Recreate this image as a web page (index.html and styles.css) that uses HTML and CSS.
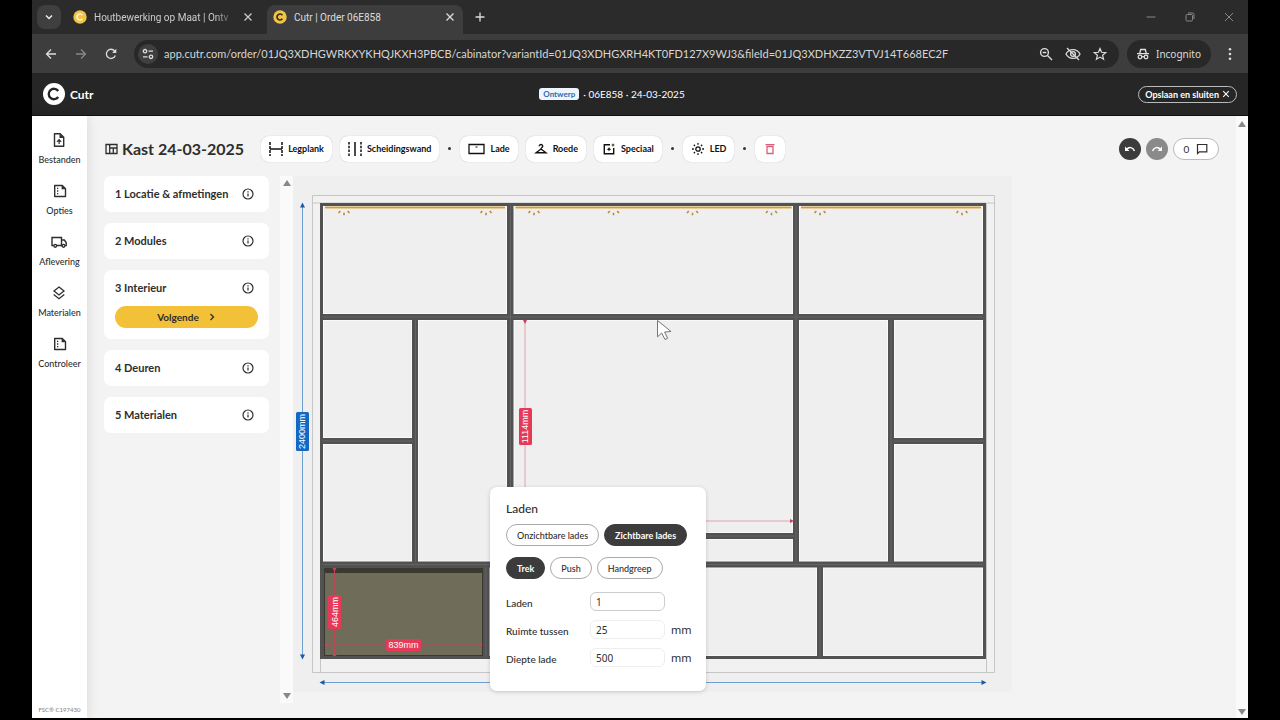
FILE: index.html
```html
<!DOCTYPE html>
<html lang="nl">
<head>
<meta charset="utf-8">
<title>Cutr | Order 06E858</title>
<link rel="stylesheet" href="styles.css">
</head>
<body>
<svg class="defs" aria-hidden="true">
  <symbol id="info" viewBox="0 0 12 12"><circle cx="6" cy="6" r="5" fill="none" stroke="currentColor" stroke-width="1.2"/><path d="M6 5.4v3.2M6 3.3v1.2" stroke="currentColor" stroke-width="1.2"/></symbol>
  <symbol id="doc" viewBox="0 0 14 14"><path d="M1.7 1.5h7.6l3.2 3.2v7.8H1.7z" fill="none" stroke="currentColor" stroke-width="1.4" stroke-linejoin="round"/><path d="M8.6 1.2v4h4.2z" fill="currentColor"/><path d="M4 4.3h1.3M4 7h1.3M4 9.700h1.3" stroke="currentColor" stroke-width="1.3"/></symbol>
  <symbol id="close" viewBox="0 0 10 10"><path d="M1.500 1.500l7 7m0-7l-7 7" fill="none" stroke="currentColor" stroke-width="1.300"/></symbol>
  <symbol id="coin" viewBox="0 0 14 14"><circle cx="7" cy="7" r="6.700" fill="#f3c344"/><path d="M9.400 5.200a3 3 0 1 0 0 3.600" fill="none" stroke="currentColor" stroke-width="1.700"/></symbol>
</svg>
<div class="window">
  <div class="tabs">
    <button class="tab-menu" aria-label="Tabbladen zoeken"><svg width="10" height="10" viewBox="0 0 10 10"><path d="M2 3.500l3 3 3-3" fill="none" stroke="#eee" stroke-width="1.500"/></svg></button>
    <div class="tab">
      <svg class="coin coin-light" width="14" height="14"><use href="#coin"/></svg>
      <span class="tab-title fade">Houtbewerking op Maat | Ontv</span>
      <button class="plain" aria-label="Tabblad sluiten"><svg width="10" height="10"><use href="#close"/></svg></button>
    </div>
    <div class="tab active">
      <svg class="coin" width="14" height="14"><use href="#coin"/></svg>
      <span class="tab-title">Cutr | Order 06E858</span>
      <button class="plain" aria-label="Tabblad sluiten"><svg width="10" height="10"><use href="#close"/></svg></button>
    </div>
    <button class="plain new-tab" aria-label="Nieuw tabblad"><svg width="10" height="10" viewBox="0 0 10 10"><path d="M5 .5v9M.5 5h9" stroke="currentColor" stroke-width="1.300"/></svg></button>
    <div class="win-controls">
      <button class="plain" aria-label="Minimaliseren"><svg width="10" height="10" viewBox="0 0 10 10"><path d="M.5 5h9" stroke="currentColor"/></svg></button>
      <button class="plain" aria-label="Verkleinen"><svg width="10" height="10" viewBox="0 0 10 10"><rect x="1" y="2.500" width="6.500" height="6.500" rx="1.200" fill="none" stroke="currentColor"/><path d="M3 1h4.500a1.500 1.500 0 0 1 1.500 1.500V7" fill="none" stroke="currentColor"/></svg></button>
      <button class="plain" aria-label="Sluiten"><svg width="10" height="10" viewBox="0 0 10 10"><path d="M1 1l8 8m0-8L1 9" stroke="currentColor"/></svg></button>
    </div>
  </div>

  <div class="address-row">
    <div class="nav">
      <button class="plain" aria-label="Terug"><svg width="12" height="12" viewBox="0 0 12 12"><path d="M11 6H1.500M6 1.500L1.500 6 6 10.500" fill="none" stroke="currentColor" stroke-width="1.300"/></svg></button>
      <button class="plain dim" aria-label="Vooruit"><svg width="12" height="12" viewBox="0 0 12 12"><path d="M1 6h9.500M6 1.500L10.500 6 6 10.500" fill="none" stroke="currentColor" stroke-width="1.300"/></svg></button>
      <button class="plain" aria-label="Vernieuwen"><svg width="12" height="12" viewBox="0 0 12 12"><path d="M10.300 7.500A4.600 4.600 0 1 1 9.600 3l1 1.200" fill="none" stroke="currentColor" stroke-width="1.300"/><path d="M11.300.8v4.200H7.100z" fill="currentColor"/></svg></button>
    </div>
    <div class="address">
      <button class="site-info" aria-label="Sitegegevens"><svg width="12" height="12" viewBox="0 0 12 12"><g fill="none" stroke="currentColor" stroke-width="1.300"><circle cx="3" cy="3.200" r="1.700"/><path d="M6.500 3.200h4.500M1 8.800h4.500"/><circle cx="9" cy="8.800" r="1.700"/></g></svg></button>
      <input class="url" aria-label="Adres" value="app.cutr.com/order/01JQ3XDHGWRKXYKHQJKXH3PBCB/cabinator?variantId=01JQ3XDHGXRH4KT0FD127X9WJ3&amp;fileId=01JQ3XDHXZZ3VTVJ14T668EC2F">
      <button class="plain" aria-label="Zoom"><svg width="14" height="14" viewBox="0 0 14 14"><g fill="none" stroke="currentColor" stroke-width="1.400"><circle cx="5.500" cy="5.500" r="3.900"/><path d="M8.500 8.500l4.500 4.500M3.700 5.500h3.600"/></g></svg></button>
      <button class="plain" aria-label="Cookies geblokkeerd"><svg width="16" height="14" viewBox="0 0 16 14"><g fill="none" stroke="currentColor" stroke-width="1.300"><path d="M1 7c3-5.800 11-5.800 14 0-3 5.800-11 5.800-14 0z"/><circle cx="8" cy="7" r="2.400"/><path d="M2 1l12 12"/></g></svg></button>
      <button class="plain" aria-label="Bladwijzer"><svg width="14" height="14" viewBox="0 0 14 14"><path d="M7 1.500l1.600 3.800 4.100.3-3.100 2.700 1 4L7 10.100l-3.600 2.200 1-4L1.300 5.600l4.100-.3z" fill="none" stroke="currentColor" stroke-width="1.200"/></svg></button>
    </div>
    <button class="incognito"><svg width="12" height="12" viewBox="0 0 12 12"><path d="M0 5.600h12M2.800 5.200L3.700 1.500h4.600l.9 3.700" fill="none" stroke="currentColor" stroke-width="1.400"/><g fill="none" stroke="currentColor" stroke-width="1.300"><circle cx="3" cy="9" r="1.800"/><circle cx="9" cy="9" r="1.800"/><path d="M4.800 8.700h2.400"/></g></svg>Incognito</button>
    <button class="plain more" aria-label="Meer"><svg width="4" height="14" viewBox="0 0 4 14"><g fill="currentColor"><circle cx="2" cy="2.200" r="1.300"/><circle cx="2" cy="7" r="1.300"/><circle cx="2" cy="11.800" r="1.300"/></g></svg></button>
  </div>

  <header class="app-header">
    <a class="brand" href="#"><svg width="22" height="22" viewBox="0 0 22 22"><circle cx="11" cy="11" r="11" fill="#fff"/><path d="M15.200 8a5.200 5.200 0 1 0 0 6" fill="none" stroke="#262626" stroke-width="2.400"/></svg>Cutr</a>
    <div class="order"><span class="badge">Ontwerp</span><span>· 06E858 · 24-03-2025</span></div>
    <button class="save">Opslaan en sluiten <svg width="8" height="8"><use href="#close"/></svg></button>
  </header>

  <div class="workspace">
    <nav class="sidebar">
      <a href="#"><svg width="14" height="14" viewBox="0 0 14 14"><path d="M2.500.8h5.700l3.500 3.500v8.900H2.500z" fill="none" stroke="currentColor" stroke-width="1.400" stroke-linejoin="round"/><path d="M7.500.8V5h4.200z" fill="currentColor"/><path d="M7.100 11V6.800M5 8.800l2.100-2.100 2.100 2.100" fill="none" stroke="currentColor" stroke-width="1.200"/></svg>Bestanden</a>
      <a href="#"><svg width="14" height="14"><use href="#doc"/></svg>Opties</a>
      <a href="#"><svg width="16" height="14" viewBox="0 0 16 14"><g fill="none" stroke="currentColor" stroke-width="1.400"><path d="M2.500 10.500H1v-8h9.500v8H6M10.500 5h2.800l1.900 2.600v2.900h-1M10.500 10.500h.5"/><circle cx="4.200" cy="10.800" r="1.400"/><circle cx="12.500" cy="10.800" r="1.400"/></g></svg>Aflevering</a>
      <a href="#"><svg width="14" height="14" viewBox="0 0 14 14"><path d="M7 1l5 4-5 4-5-4zM1.700 8.500L7 12.700l5.300-4.200" fill="none" stroke="currentColor" stroke-width="1.300"/></svg>Materialen</a>
      <a href="#"><svg width="14" height="14"><use href="#doc"/></svg>Controleer</a>
      <small>FSC® C197430</small>
    </nav>

    <main class="content">
      <div class="top">
        <h1><svg width="13" height="12" viewBox="0 0 13 12"><path d="M1 1.500h11v9H1zM4.700 1.500v9M4.700 5h7.300M8.300 5v5.500" fill="none" stroke="currentColor" stroke-width="1.300"/></svg>Kast 24-03-2025</h1>
        <div class="tools">
          <button><svg width="14" height="14" viewBox="0 0 14 14"><path d="M1 7h12" stroke="currentColor" stroke-width="1.500"/><path d="M1 0v14M13 0v14" stroke="currentColor" stroke-width="1.500" stroke-dasharray="3 1"/></svg>Legplank</button>
          <button><svg width="14" height="14" viewBox="0 0 14 14"><path d="M7 0v14" stroke="currentColor" stroke-width="1.500"/><path d="M1 0v14M13 0v14" stroke="currentColor" stroke-width="1.500" stroke-dasharray="2.500 1.300"/></svg>Scheidingswand</button>
          <i class="dot"></i>
          <button><svg width="17" height="12" viewBox="0 0 17 12"><path d="M1 1.500h15v9H1z" fill="none" stroke="currentColor" stroke-width="1.300"/><path d="M7.500 4h2" stroke="currentColor"/></svg>Lade</button>
          <button><svg width="14" height="12" viewBox="-1 0 14 12"><path d="M4.300 3.200c0-2.200 3.400-2.200 3.400 0C7.700 4.500 6 4.400 6 6L1 9.800h10L6 6" fill="none" stroke="currentColor" stroke-width="1.400"/></svg>Roede</button>
          <button><svg width="14" height="12" viewBox="-1 0 14 12"><path d="M7 1.700H1.300v9h9.400V5" fill="none" stroke="currentColor" stroke-width="1.400"/><path d="M6 4l.7 1.600 1.600.7-1.600.7L6 8.600 5.300 7l-1.600-.7 1.600-.7zM10 0l.5 1.500 1.500.5-1.500.5L10 4l-.5-1.500L8 2l1.500-.5z" fill="currentColor"/></svg>Speciaal</button>
          <i class="dot"></i>
          <button><svg width="14" height="12" viewBox="-1 0 14 12"><g fill="none" stroke="currentColor" stroke-width="1.300"><circle cx="6" cy="6" r="2.200"/><path d="M6 0v1.800M6 10.200V12M0 6h1.800M10.200 6H12M1.800 1.800L3 3M9 9l1.200 1.200M1.800 10.200L3 9M9 3l1.200-1.200"/></g></svg>LED</button>
          <i class="dot"></i>
          <button class="delete" aria-label="Verwijderen"><svg width="10" height="12" viewBox="0 0 10 12"><path d="M.5 1.600h9M2 3.500v7h6v-7z" fill="none" stroke="currentColor" stroke-width="1.300"/></svg></button>
        </div>
        <div class="history">
          <button class="round" aria-label="Ongedaan maken"><svg width="12" height="10" viewBox="0 0 12 10"><path d="M2.500 5.500C5 2.500 9 3 10.500 7" fill="none" stroke="currentColor" stroke-width="1.500"/><path d="M1 2.500v4.500h4.500z" fill="currentColor"/></svg></button>
          <button class="round faded" aria-label="Opnieuw"><svg width="12" height="10" viewBox="0 0 12 10"><path d="M9.500 5.500C7 2.500 3 3 1.500 7" fill="none" stroke="currentColor" stroke-width="1.500"/><path d="M11 2.500v4.500H6.500z" fill="currentColor"/></svg></button>
          <button class="comments">0 <svg width="12" height="12" viewBox="0 0 12 12"><path d="M1.500 10.500v-9h9.300v7.300H3.300z" fill="none" stroke="currentColor" stroke-width="1.200"/></svg></button>
        </div>
      </div>

      <div class="body">
        <div class="steps">
          <section class="step"><h2>1 Locatie &amp; afmetingen</h2><svg width="12" height="12"><use href="#info"/></svg></section>
          <section class="step"><h2>2 Modules</h2><svg width="12" height="12"><use href="#info"/></svg></section>
          <section class="step open"><h2>3 Interieur</h2><svg width="12" height="12"><use href="#info"/></svg>
            <button class="next">Volgende <svg width="8" height="8" viewBox="0 0 8 8"><path d="M2.500 1l3 3-3 3" fill="none" stroke="currentColor" stroke-width="1.300"/></svg></button></section>
          <section class="step"><h2>4 Deuren</h2><svg width="12" height="12"><use href="#info"/></svg></section>
          <section class="step"><h2>5 Materialen</h2><svg width="12" height="12"><use href="#info"/></svg></section>
        </div>
        <div class="track inner"><i class="up"></i><i class="down"></i></div>
        <div class="canvas">
          <svg class="drawing" viewBox="293 176 719 516" role="img" aria-label="Vooraanzicht kast">
            <defs>
              <g id="glow" fill="none" stroke="#b98d38" stroke-width="1.600"><path d="M-5.500 1l1.800-2M5.500 1L3.700-1M0 .8v2.400"/></g>
            </defs>
            <path d="M312.500 195.500h682v477h-682zM312.500 203h682M320.500 203v469.500M986.500 203v469.500" fill="#f1f1f1" stroke="#c6c6c6"/>
            <rect x="320" y="203" width="666" height="456" fill="#525252"/>
            <path d="M323 317h660M323 564.500h660M323 441h90M894 441h90M514 536h280M510.500 206v356M796 206v356M415.500 320v242M891 320v242M486 567v90M820 567v90" stroke="#646464"/>
            <g fill="#efefef" stroke="#fafafa">
              <rect x="323.500" y="206.500" width="183" height="107"/>
              <rect x="514" y="206.500" width="278.500" height="107"/>
              <rect x="799.500" y="206.500" width="183" height="107"/>
              <rect x="323.500" y="320.500" width="88" height="117"/>
              <rect x="323.500" y="444.500" width="88" height="116.500"/>
              <rect x="418.500" y="320.500" width="88" height="240.500"/>
              <rect x="514" y="320.500" width="278.500" height="212"/>
              <rect x="514" y="539.500" width="278.500" height="21.500"/>
              <rect x="799.500" y="320.500" width="88" height="240.500"/>
              <rect x="894.500" y="320.500" width="88" height="117"/>
              <rect x="894.500" y="444.500" width="88" height="116.500"/>
              <rect x="490" y="568" width="326.500" height="87.500"/>
              <rect x="823.500" y="568" width="159" height="87.500"/>
            </g>
            <rect x="324" y="568" width="159" height="88" fill="#3a392f"/>
            <rect x="325" y="573" width="157" height="82" fill="#6f6c5a"/>
            <path d="M325 207.500h180M515.500 207.500h276M801 207.500h180" stroke="#f4dfb4" stroke-width="3"/>
            <path d="M325 207.500h180M515.500 207.500h276M801 207.500h180" stroke="#c49c54" stroke-width="1.500"/>
            <use href="#glow" x="344" y="212"/><use href="#glow" x="486" y="212"/><use href="#glow" x="534" y="212"/><use href="#glow" x="613.500" y="212"/><use href="#glow" x="692.500" y="212"/><use href="#glow" x="771.500" y="212"/><use href="#glow" x="820" y="212"/><use href="#glow" x="962" y="212"/>
            <g stroke="#6f9fce"><path d="M302.500 206v450M323 682.500h660"/></g>
            <path d="M302.500 202.500l2.500 5h-5zM302.500 659.500l2.500-5h-5zM319.500 682.500l5-2.500v5zM986.500 682.500l-5-2.500v5z" fill="#1a5ba6"/>
            <path d="M525 322v210M516 521h276" stroke="#e0a3b1"/>
            <path d="M334.500 570v85M326 645h156" stroke="#b34a55"/>
            <path d="M525 324l2-4h-4zM794 521l-4-2v4zM334.500 572l2-4h-4zM334.500 652l2 4h-4zM324 645l4-2v4zM483 645l-4-2v4z" fill="#c8405c"/>
            <rect x="296" y="412" width="13" height="39" rx="1.500" fill="#1268c4"/>
            <rect x="519" y="408" width="13" height="37" rx="1.500" fill="#e63957"/>
            <rect x="328" y="595" width="13" height="34" rx="1.500" fill="#e63957"/>
            <rect x="386" y="639" width="35" height="12" rx="1.500" fill="#e63957"/>
            <g class="dim-text">
              <text transform="translate(305 431.500) rotate(-90)">2400mm</text>
              <text transform="translate(528 426.500) rotate(-90)">1114mm</text>
              <text transform="translate(338 612) rotate(-90)">464mm</text>
              <text x="403.500" y="648">839mm</text>
            </g>
            <path d="M657.500 320.500v16.300l4.200-3.800 3.300 6.500 2.600-1.200-3-6.300 6.400-.5z" fill="#fff" stroke="#666" stroke-width=".9"/>
          </svg>
          <form class="popup">
            <h3>Laden</h3>
            <div class="pills"><button type="button">Onzichtbare lades</button><button type="button" class="on">Zichtbare lades</button></div>
            <div class="pills"><button type="button" class="on">Trek</button><button type="button">Push</button><button type="button">Handgreep</button></div>
            <div class="fields">
              <label for="count">Laden</label><input id="count" class="outlined" value="1"><span></span>
              <label for="space">Ruimte tussen</label><input id="space" value="25"><span>mm</span>
              <label for="depth">Diepte lade</label><input id="depth" value="500"><span>mm</span>
            </div>
          </form>
        </div>
      </div>
    </main>
    <div class="track"><i class="up"></i><i class="down"></i></div>
  </div>
</div>
</body>
</html>
```
FILE: styles.css
```css
* { box-sizing: border-box; }
body {
  margin: 0;
  padding: 0 32px 2px;
  background: #000;
  font-family: Lato, "Open Sans", sans-serif;
  color: #2e2e2e;
}
button, input { font: inherit; color: inherit; margin: 0; }
button { border: 0; padding: 0; display: flex; align-items: center; justify-content: center; white-space: nowrap; }
a { color: inherit; text-decoration: none; }
svg { flex: none; display: block; }
.defs { position: absolute; width: 0; height: 0; }
.plain { background: none; }
.window { height: calc(100vh - 2px); display: flex; flex-direction: column; background: #f3f3f3; }

.tabs { flex: none; height: 34px; display: flex; align-items: center; padding-left: 5px; background: #2b2b2b; color: #ddd; font: 10px Roboto, sans-serif; }
.tab-menu { width: 24px; height: 24px; border-radius: 8px; background: #3f3f3f; }
.tab { width: 206px; height: 34px; padding: 0 14px 0 12px; display: flex; align-items: center; gap: 7px; }
.tab:not(.active) { color: #ccc; }
.tab.active { width: 196px; height: 29px; margin-top: 5px; padding: 0 8px 5px 6px; border-radius: 8px 8px 0 0; background: #3d3d3d; }
.coin { color: #3a3018; }
.coin-light { color: #fff3cf; }
.tab-title { flex: 1; white-space: nowrap; }
.fade { mask-image: linear-gradient(to right, #000 85%, transparent); }
.new-tab { margin-left: 12px; }
.win-controls { margin-left: auto; display: flex; gap: 29px; padding-right: 14px; color: #888; }

.address-row { flex: none; height: 39px; display: flex; align-items: center; padding: 0 16px 0 13px; background: #3d3d3d; color: #ddd; font: 11px Lato, sans-serif; }
.nav { display: flex; gap: 18px; width: 89px; }
.dim { color: #888; }
.address { flex: 1; min-width: 0; height: 28px; display: flex; align-items: center; gap: 12px; padding: 0 12px 0 4px; border-radius: 14px; background: #282828; }
.site-info { width: 20px; height: 20px; border-radius: 50%; background: #3f3f3f; flex: none; }
.url { flex: 1; min-width: 0; margin-left: -6px; padding: 0; border: 0; background: none; color: #d6d6d6; }
.incognito { height: 28px; margin-left: 8px; padding: 0 10px; gap: 7px; border-radius: 14px; background: #282828; font: 10px "Noto Sans", sans-serif; }
.more { margin-left: 17px; }

.app-header { flex: none; height: 43px; display: grid; grid-template-columns: 1fr auto 1fr; align-items: center; padding: 0 11px; background: #262626; color: #fff; border-bottom: 1px solid #111; }
.brand { display: flex; align-items: center; gap: 5px; font-size: 12px; font-weight: 700; }
.order { display: flex; align-items: center; gap: 4px; margin-right: 56px; font-size: 10px; }
.badge { padding: 0 4px; border-radius: 3px; background: #eef7ff; color: #2a6cae; font-size: 8px; line-height: 12px; font-weight: 700; }
.save { justify-self: end; height: 17px; padding: 0 6px; gap: 3px; border: 1px solid #bbb; border-radius: 9px; background: none; font-size: 9px; font-weight: 700; }

.workspace { flex: 1; min-height: 0; display: flex; }
.sidebar { flex: none; width: 55px; padding: 17px 0 5px; display: flex; flex-direction: column; align-items: center; gap: 17px; background: #fff; font-size: 9px; font-weight: 500; box-shadow: 0 0 12px rgba(0, 0, 0, .12); }
.sidebar a { height: 34px; display: flex; flex-direction: column; align-items: center; gap: 7px; line-height: 12px; }
.sidebar small { margin-top: auto; font-size: 6px; color: #888; }
.content { flex: 1; min-width: 0; padding: 19px 17px 0; display: flex; flex-direction: column; }
.top { display: flex; align-items: center; height: 27px; }
h1 { margin: 0 17px 0 1px; display: flex; align-items: center; gap: 4px; font-size: 16px; line-height: 24px; white-space: nowrap; }
.tools { display: flex; align-items: center; gap: 8px; font-size: 9px; font-weight: 700; color: #111; }
.tools button { height: 26px; padding: 0 8px; gap: 5px; border-radius: 8px; background: #fff; box-shadow: 0 0 1px rgba(0, 0, 0, .3); }
.tools .delete { width: 30px; color: #d9607a; }
.dot { width: 3px; height: 3px; margin: 0 1px; border-radius: 50%; background: #333; }
.history { margin-left: auto; display: flex; gap: 5px; }
.round { width: 22px; height: 22px; border-radius: 50%; background: #3c3c3c; color: #fff; }
.faded { background: #8a8a8a; }
.comments { width: 46px; height: 22px; gap: 7px; border: 1px solid #bbb; border-radius: 11px; background: #fff; font-size: 10px; }

.body { flex: 1; min-height: 0; display: flex; padding-top: 14px; }
.steps { flex: none; width: 165px; display: flex; flex-direction: column; gap: 11px; }
.step { min-height: 36px; padding: 0 15px 0 11px; display: flex; flex-wrap: wrap; align-items: center; justify-content: space-between; border-radius: 7px; background: #fff; }
.step h2 { margin: 0; font-size: 11px; line-height: 36px; font-weight: 700; }
.next { width: 143px; height: 22px; margin: 0 -4px 11px 0; gap: 9px; border-radius: 11px; background: #f3c137; font-size: 10px; font-weight: 700; flex: none; }
.track { flex: none; width: 12px; padding: 5px 0 3px; display: flex; flex-direction: column; align-items: center; justify-content: space-between; background: #fafafa; }
.inner { width: 13px; margin: 0 0 15px 11px; padding: 4px 0; }
.up, .down { border: 4px solid transparent; }
.up { border-top: 0; border-bottom: 6px solid #888; }
.down { border-bottom: 0; border-top: 6px solid #888; }
.canvas { flex: 1; min-width: 0; position: relative; }
.drawing { width: 100%; max-width: 719px; background: #efefef; }
.dim-text { font: 9px "Liberation Sans", sans-serif; fill: #fff; text-anchor: middle; }

.popup { position: absolute; left: 197px; top: 311px; width: 216px; padding: 14px 16px 22px; border-radius: 7px; background: #fff; box-shadow: 0 1px 4px rgba(0, 0, 0, .18); }
.popup h3 { margin: 0 0 7px; font-size: 12px; line-height: 16px; font-weight: 500; }
.pills { display: flex; gap: 5px; margin-bottom: 11px; font-size: 9px; font-weight: 500; }
.pills button { height: 22px; padding: 0 10px; border: 1px solid #aaa; border-radius: 11px; background: #fff; }
.pills .on { border-color: #3c3c3c; background: #3c3c3c; color: #fff; font-weight: 700; }
.fields { display: grid; grid-template-columns: 84px 75px auto; row-gap: 5px; align-items: center; font-size: 10px; line-height: 19px; font-weight: 500; }
.fields label { padding-top: 4px; }
.fields input { width: 75px; height: 19px; padding: 0 5px; border: 1px solid #eee; border-radius: 6px; background: #fff; font: 10px "Noto Sans", sans-serif; }
.fields .outlined { border-color: #ccc; }
.fields span { padding-left: 6px; font: 11px "Noto Sans", sans-serif; }
```
